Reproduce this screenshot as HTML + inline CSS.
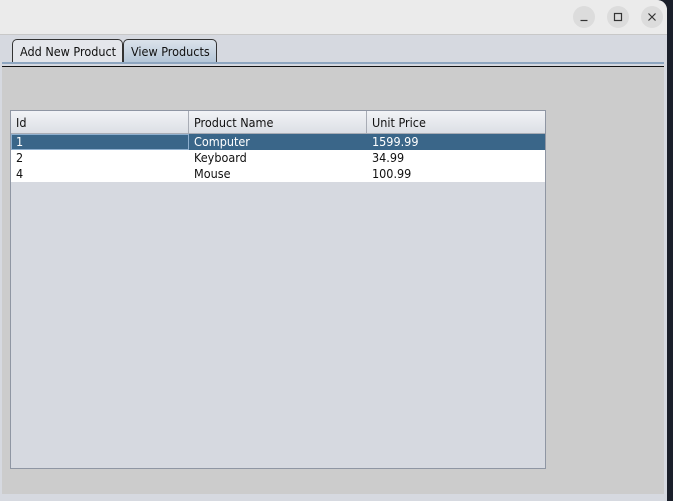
<!DOCTYPE html>
<html><head><style>
*{margin:0;padding:0;box-sizing:border-box}
body{width:673px;height:501px;background:#1a1f2a;position:relative;overflow:hidden;font-family:"DejaVu Sans Condensed","DejaVu Sans","Liberation Sans",sans-serif;font-size:12.5px;color:#111}
.win{position:absolute;left:0;top:0;width:667px;height:501px;background:#d6d9e0;border-top-right-radius:10px;overflow:hidden}
.title{position:absolute;left:0;top:0;width:667px;height:35px;background:#ebebeb;border-bottom:1px solid #c8c8c8}
.btn{position:absolute;top:6px;width:22px;height:22px;border-radius:11px;background:#dcdcdc}
.btn svg{position:absolute;left:0;top:0}
.tab{position:absolute;top:39px;height:24px;border:1px solid #333;border-bottom:none;border-radius:5px 5px 0 0;padding:4px 0 0 7px;font-size:12.5px}
.panel{position:absolute;left:2px;top:67px;width:662px;height:427px;background:#cccccc}
.tbl{position:absolute;left:10px;top:110px;width:536px;height:359px;background:#d6d9e0;border:1px solid #8f96a3}
.hd{position:absolute;left:0;top:0;width:534px;height:23px;background:linear-gradient(#f2f3f6,#dcdfe5);border-bottom:1px solid #a8acb5}
.hd div{position:absolute;top:0;height:22px;padding:4px 5px;border-right:1px solid #a8acb5}
.row{position:absolute;left:0;width:534px;height:16px;background:#fff}
.row span{position:absolute;top:0;line-height:16px}
</style></head><body>
<div class="win">
<div class="title">
<div class="btn" style="left:573px"><svg width="22" height="22"><path d="M7.5 14.5h7" stroke="#333" stroke-width="1.2"/></svg></div>
<div class="btn" style="left:607px"><svg width="22" height="22"><rect x="7.5" y="7.5" width="7" height="7" fill="none" stroke="#333" stroke-width="1.2"/></svg></div>
<div class="btn" style="left:641px"><svg width="22" height="22"><path d="M7.5 7.5l7 7M14.5 7.5l-7 7" stroke="#333" stroke-width="1.2"/></svg></div>
</div>
<div class="tab" style="left:12px;width:111px;background:#e4e6eb">Add New Product</div>
<div class="tab" style="left:123px;width:94px;background:linear-gradient(#dbe2ea,#b4c6d8)">View Products</div>
<div style="position:absolute;left:2px;top:62px;width:662px;height:2px;background:#8ea6c0"></div>
<div style="position:absolute;left:2px;top:66px;width:662px;height:1px;background:#111"></div>
<div class="panel"></div>
<div class="tbl">
<div class="hd"><div style="left:0;width:178px">Id</div><div style="left:178px;width:178px">Product Name</div><div style="left:356px;width:178px;border-right:none">Unit Price</div></div>
<div class="row" style="top:23px;background:#3a6689;color:#fff"><span style="left:0;width:178px;height:16px;border:1px solid #8fb0cf"></span><span style="left:5px">1</span><span style="left:183px">Computer</span><span style="left:361px">1599.99</span></div>
<div class="row" style="top:39px"><span style="left:5px">2</span><span style="left:183px">Keyboard</span><span style="left:361px">34.99</span></div>
<div class="row" style="top:55px"><span style="left:5px">4</span><span style="left:183px">Mouse</span><span style="left:361px">100.99</span></div>
</div>
</div>
</body></html>
